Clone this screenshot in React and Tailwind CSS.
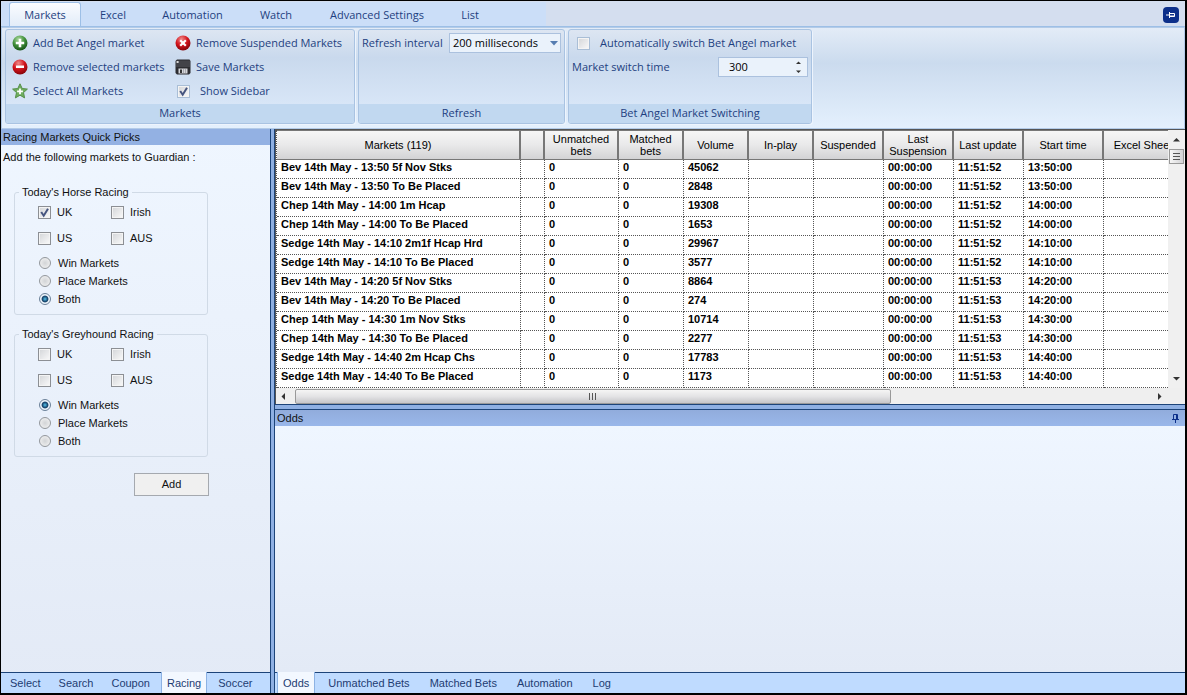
import React, { useState } from "react";
import clsx from "clsx";

const ribbonTabs = [
  { name: "Markets", width: "w-[72px]" },
  { name: "Excel", width: "w-16" },
  { name: "Automation", width: "w-[95px]" },
  { name: "Watch", width: "w-[72px]" },
  { name: "Advanced Settings", width: "w-[130px]" },
  { name: "List", width: "w-14" },
];

const sideTabs = ["Select", "Search", "Coupon", "Racing", "Soccer"];
const oddsTabs = ["Odds", "Unmatched Bets", "Matched Bets", "Automation", "Log"];

const columns = [
  { title: "Markets (119)", width: "w-[244px]" },
  { title: "", width: "w-6" },
  { title: "Unmatched bets", width: "w-[74px]" },
  { title: "Matched bets", width: "w-[65px]" },
  { title: "Volume", width: "w-[65px]" },
  { title: "In-play", width: "w-[65px]" },
  { title: "Suspended", width: "w-[70px]" },
  { title: "Last Suspension", width: "w-[70px]" },
  { title: "Last update", width: "w-[70px]" },
  { title: "Start time", width: "w-20" },
  { title: "Excel Sheet", width: "w-20" },
];

const markets = [
  { name: "Bev 14th May - 13:50 5f Nov Stks", volume: 45062, update: "11:51:52", start: "13:50:00" },
  { name: "Bev 14th May - 13:50 To Be Placed", volume: 2848, update: "11:51:52", start: "13:50:00" },
  { name: "Chep 14th May - 14:00 1m Hcap", volume: 19308, update: "11:51:52", start: "14:00:00" },
  { name: "Chep 14th May - 14:00 To Be Placed", volume: 1653, update: "11:51:52", start: "14:00:00" },
  { name: "Sedge 14th May - 14:10 2m1f Hcap Hrd", volume: 29967, update: "11:51:52", start: "14:10:00" },
  { name: "Sedge 14th May - 14:10 To Be Placed", volume: 3577, update: "11:51:52", start: "14:10:00" },
  { name: "Bev 14th May - 14:20 5f Nov Stks", volume: 8864, update: "11:51:53", start: "14:20:00" },
  { name: "Bev 14th May - 14:20 To Be Placed", volume: 274, update: "11:51:53", start: "14:20:00" },
  { name: "Chep 14th May - 14:30 1m Nov Stks", volume: 10714, update: "11:51:53", start: "14:30:00" },
  { name: "Chep 14th May - 14:30 To Be Placed", volume: 2277, update: "11:51:53", start: "14:30:00" },
  { name: "Sedge 14th May - 14:40 2m Hcap Chs", volume: 17783, update: "11:51:53", start: "14:40:00" },
  { name: "Sedge 14th May - 14:40 To Be Placed", volume: 1173, update: "11:51:53", start: "14:40:00" },
];

const BallIcon = ({ kind }) => {
  const id = `ball-${kind}`;
  const green = kind === "plus";
  return (
    <svg width="16" height="16" viewBox="0 0 16 16" aria-hidden="true">
      <defs>
        <radialGradient id={id} cx="0.4" cy="0.25" r="0.8">
          <stop offset="0" stopColor={green ? "#a9d79d" : "#f08a8a"} />
          <stop offset="0.5" stopColor={green ? "#43923c" : "#d2141c"} />
          <stop offset="1" stopColor={green ? "#124d12" : "#7c0308"} />
        </radialGradient>
      </defs>
      <circle cx="8" cy="8" r="7.5" fill={`url(#${id})`} />
      {kind === "plus" && <path d="M8 3.8v8.4M3.8 8h8.4" stroke="#fff" strokeWidth="2.6" />}
      {kind === "minus" && <path d="M4 7.7h8" stroke="#fff" strokeWidth="2.6" />}
      {kind === "cross" && <path d="M5.2 5.2l5.6 5.6M10.8 5.2l-5.6 5.6" stroke="#fff" strokeWidth="2.2" />}
    </svg>
  );
};

const StarIcon = () => (
  <svg width="16" height="16" viewBox="0 0 16 16" aria-hidden="true">
    <path d="M8 .8l2.200 4.700 5.200.6-3.900 3.500 1.100 5.300L8 12.200l-4.600 2.700 1.100-5.300L.6 6.100l5.200-.6z" fill="#6fae5f" stroke="#568f4a" strokeWidth="1" />
    <path d="M8 5.400v5.800M5.100 8.300h5.800" stroke="#fff" strokeWidth="1.8" />
  </svg>
);

const SaveIcon = () => (
  <svg width="16" height="16" viewBox="0 0 16 16" aria-hidden="true">
    <path d="M2 .5h12.500l1 1.500v12l-1.500 1.500H2L.5 14V2z" fill="#2d2d31" />
    <path d="M1 1.500h14V8H1z" fill="#434348" />
    <path d="M1.600 2h2v2h-2z" fill="#d8d8d8" />
    <path d="M3.500 9.500h9v5h-9z" fill="#d5d6da" />
    <path d="M5 10.500h2V14H5z" fill="#333" />
    <path d="M8.500 10v4M10.500 10v4" stroke="#a9a9ae" />
  </svg>
);

const Arrow = ({ dir, size = 7 }) => {
  const paths = {
    up: "M0 5.500L3.500 2 7 5.500z",
    down: "M0 2h7L3.500 5.500z",
    left: "M5 0v7L1.500 3.500z",
    right: "M2 0v7l3.500-3.500z",
  };
  return (
    <svg width={size} height={size} viewBox="0 0 7 7" aria-hidden="true">
      <path d={paths[dir]} fill="#333" />
    </svg>
  );
};

const Tick = () => (
  <svg className="absolute inset-0 hidden pointer-events-none peer-checked:block" width="13" height="13" viewBox="0 0 13 13" aria-hidden="true">
    <path d="M3.200 6l2.500 3.700L10 2.800" fill="none" stroke="#46557f" strokeWidth="2" />
  </svg>
);

const Checkbox = ({ id, checked, light }) => (
  <span className="relative flex size-[13px] shrink-0">
    <input
      id={id}
      type="checkbox"
      defaultChecked={checked}
      className={clsx(
        "peer size-[13px] appearance-none border bg-linear-to-br from-[#d3d5d8] to-[#fafafa] shadow-[inset_0_0_0_1px_#f4f4f4]",
        light ? "border-[#a9bed6]" : "border-[#8c8f94]"
      )}
    />
    <Tick />
  </span>
);

const Radio = ({ id, name, checked }) => (
  <input
    id={id}
    name={name}
    type="radio"
    defaultChecked={checked}
    className="size-3 shrink-0 appearance-none rounded-full border border-[#93979c] bg-radial from-[#d2d4d6] to-[#f6f6f6] checked:border-[#6b8199] checked:bg-radial checked:from-[#4fb4dc] checked:from-5% checked:via-[#123f66] checked:via-40% checked:to-[#eef5fb] checked:to-55%"
  />
);

const RibbonGroup = ({ title, className, children }) => (
  <section className={clsx("flex flex-col overflow-hidden rounded-[3px] border border-[#a9c3e2] bg-linear-to-b from-[#dde6f2] via-[#c9d9ed] via-30% to-[#deebfb] shadow-[1px_1px_0_#edf4fd]", className)}>
    <div className="h-[74px] pt-px">{children}</div>
    <h2 className="h-[19px] bg-[#c1d8f0] text-center leading-[18px]">{title}</h2>
  </section>
);

const RibbonButton = ({ icon, children }) => (
  <button type="button" className="flex h-6 items-center gap-[5px] whitespace-nowrap">
    {icon}
    {children}
  </button>
);

const Ribbon = () => {
  const [active, setActive] = useState("Markets");
  return (
    <header className="bg-[#d4deef] font-['Open_Sans',sans-serif] text-[11px] text-[#1e3f80]">
      <div className="flex h-[26px] items-end justify-between border-b border-[#9dbfe6] pr-1.5">
        <nav className="flex bg-[#cbdef8] pl-2 pr-12">
          {ribbonTabs.map((tab) => (
            <button
              key={tab.name}
              type="button"
              onClick={() => setActive(tab.name)}
              className={clsx(
                "h-6 whitespace-nowrap rounded-t-[3px] border border-b-0 pt-0.5",
                tab.width,
                active === tab.name ? "border-[#9dbfe6] bg-linear-to-b from-[#fafcff] to-[#e2ecf8]" : "border-transparent"
              )}
            >
              {tab.name}
            </button>
          ))}
        </nav>
        <button type="button" aria-label="Pin ribbon" className="mb-[3px] flex size-4 items-center justify-center rounded-[4px] bg-[#0c2f8a]">
          <svg width="10" height="8" viewBox="0 0 10 8" fill="none" stroke="#fff" aria-hidden="true">
            <path d="M0 4h4M3.500 1v6M3.500 2.500h5v3h-5M3.500 5h5" />
          </svg>
        </button>
      </div>
      <div className="flex items-start gap-[3px] border border-[#b3cbe8] bg-linear-to-b from-[#e3ecf7] via-[#cbdbee] via-35% to-[#e4f0fd] px-[3px] pt-px pb-1">
        <RibbonGroup title="Markets" className="w-[350px]">
          <div className="grid grid-cols-[163px_auto] justify-start pl-1.5">
            <RibbonButton icon={<BallIcon kind="plus" />}>Add Bet Angel market</RibbonButton>
            <RibbonButton icon={<BallIcon kind="cross" />}>Remove Suspended Markets</RibbonButton>
            <RibbonButton icon={<BallIcon kind="minus" />}>Remove selected markets</RibbonButton>
            <RibbonButton icon={<SaveIcon />}>Save Markets</RibbonButton>
            <RibbonButton icon={<StarIcon />}>Select All Markets</RibbonButton>
            <div className="flex h-6 items-center gap-2.5 pl-0.5">
              <Checkbox id="show-sidebar" checked light />
              <label htmlFor="show-sidebar">Show Sidebar</label>
            </div>
          </div>
        </RibbonGroup>
        <RibbonGroup title="Refresh" className="w-[207px]">
          <div className="flex h-6 items-center justify-between px-[3px]">
            <label htmlFor="interval">Refresh interval</label>
            <div className="relative">
              <select id="interval" className="block h-5 w-28 appearance-none border border-[#abc1de] bg-[#eaf2fb] pl-[3px] text-black">
                <option>200 milliseconds</option>
                <option>500 milliseconds</option>
                <option>1 second</option>
              </select>
              <svg className="pointer-events-none absolute top-2 right-[3px]" width="8" height="5" viewBox="0 0 8 5" aria-hidden="true">
                <path d="M0 0h8L4 4.500z" fill="#567db1" />
              </svg>
            </div>
          </div>
        </RibbonGroup>
        <RibbonGroup title="Bet Angel Market Switching" className="w-[244px]">
          <div className="flex h-6 items-center gap-2.5 pl-2">
            <Checkbox id="auto-switch" light />
            <label htmlFor="auto-switch">Automatically switch Bet Angel market</label>
          </div>
          <div className="flex h-6 items-center justify-between px-[3px]">
            <label htmlFor="switch-time">Market switch time</label>
            <div className="flex h-5 w-[90px] items-center border border-[#abc1de] bg-[#eaf2fb] pr-1.5">
              <input id="switch-time" type="text" defaultValue="300" className="w-full min-w-0 pl-2.5 text-black" />
              <span className="flex flex-col gap-1">
                <button type="button" aria-label="Increase"><Arrow dir="up" size={5} /></button>
                <button type="button" aria-label="Decrease"><Arrow dir="down" size={5} /></button>
              </span>
            </div>
          </div>
        </RibbonGroup>
      </div>
    </header>
  );
};

const PickGroup = ({ id, title, checked = [], market }) => (
  <fieldset className="ml-[13px] w-[194px] rounded-[3px] border border-[#d0dae6] pb-1.5 pl-[23px]">
    <legend className="-ml-[19px] px-[3px] leading-[14px]">{title}</legend>
    <div className="mb-[3px] grid grid-cols-[73px_auto] justify-start">
      {["UK", "Irish", "US", "AUS"].map((country) => (
        <div key={country} className="flex h-[26px] items-center gap-1.5">
          <Checkbox id={`${id}-${country}`} checked={checked.includes(country)} />
          <label htmlFor={`${id}-${country}`}>{country}</label>
        </div>
      ))}
    </div>
    {["Win Markets", "Place Markets", "Both"].map((item) => (
      <div key={item} className="flex h-[18px] items-center gap-[7px] pl-px">
        <Radio id={`${id}-${item}`} name={id} checked={item === market} />
        <label htmlFor={`${id}-${item}`}>{item}</label>
      </div>
    ))}
  </fieldset>
);

const BottomTabs = ({ tabs, start, className }) => {
  const [active, setActive] = useState(start);
  return (
    <nav className={clsx("flex h-[21px] shrink-0 border-t border-[#1d4479] bg-[#bfdbff] text-[#1e3c72]", className)}>
      {tabs.map((tab) => (
        <button
          key={tab}
          type="button"
          onClick={() => setActive(tab)}
          className={clsx(
            "-mt-px h-[21px] whitespace-nowrap border-x pt-0.5",
            active === tab ? "mx-0.5 border-[#8db2e3] bg-[#f3f8ff] px-[5px]" : "border-transparent px-2"
          )}
        >
          {tab}
        </button>
      ))}
    </nav>
  );
};

const Sidebar = () => (
  <aside className="flex w-[270px] shrink-0 flex-col border-r border-[#1d4479] bg-linear-to-b from-[#eff6ff] to-[#e3eaf6]">
    <h2 className="h-4 bg-[#93b1e3] pl-0.5 leading-4">Racing Markets Quick Picks</h2>
    <p className="pt-1 pl-0.5 leading-4">Add the following markets to Guardian :</p>
    <div className="flex flex-1 flex-col gap-3 pt-5">
      <PickGroup id="horses" title="Today's Horse Racing" checked={["UK"]} market="Both" />
      <PickGroup id="dogs" title="Today's Greyhound Racing" market="Win Markets" />
      <button type="button" className="mt-1 ml-[133px] h-[23px] w-[75px] border border-[#a5a9af] bg-[#f0f0f0]">
        Add
      </button>
    </div>
    <BottomTabs tabs={sideTabs} start="Racing" />
  </aside>
);

const cell = "border-r border-b border-dotted border-[#555] pl-1 leading-[14px] align-top";

const MarketTable = () => (
  <div className="min-w-0 flex-1 overflow-hidden bg-white">
    <table className="w-[908px] table-fixed border-separate border-spacing-0 border-l border-dotted border-[#555] text-left text-black">
      <thead>
        <tr className="h-[30px]">
          {columns.map((col, i) => (
            <th
              key={i}
              scope="col"
              className={clsx(
                "border-r-2 border-y border-[#777] bg-linear-to-b from-[#f6f6f6] via-[#e9e9ea] via-50% to-[#d3d3d5] p-0 text-center leading-3 font-normal",
                col.width
              )}
            >
              {col.title}
            </th>
          ))}
        </tr>
      </thead>
      <tbody className="font-bold">
        {markets.map((m) => (
          <tr key={m.name} className="h-[19px]">
            <td className={cell}>{m.name}</td>
            <td className={cell}></td>
            <td className={cell}>0</td>
            <td className={cell}>0</td>
            <td className={cell}>{m.volume}</td>
            <td className={cell}></td>
            <td className={cell}></td>
            <td className={cell}>00:00:00</td>
            <td className={cell}>{m.update}</td>
            <td className={cell}>{m.start}</td>
            <td className={cell}></td>
          </tr>
        ))}
      </tbody>
    </table>
  </div>
);

const MarketGrid = () => (
  <section className="border-t border-l border-[#555] bg-[#efefef]">
    <div className="flex">
      <MarketTable />
      <div className="flex w-[17px] shrink-0 flex-col items-center justify-between bg-[#f0f0f0] py-1">
        <div className="flex flex-col items-center gap-1">
          <button type="button" aria-label="Scroll up" className="py-0.5"><Arrow dir="up" /></button>
          <div className="flex h-[15px] w-[15px] flex-col items-center justify-center gap-0.5 border border-[#999] bg-linear-to-r from-[#f7f7f7] to-[#d2d2d4]">
            <span className="h-px w-[7px] bg-[#555]" />
            <span className="h-px w-[7px] bg-[#555]" />
            <span className="h-px w-[7px] bg-[#555]" />
          </div>
        </div>
        <button type="button" aria-label="Scroll down" className="py-0.5"><Arrow dir="down" /></button>
      </div>
    </div>
    <div className="flex h-4 items-center justify-between pr-[22px] pl-1">
      <div className="flex flex-1 items-center gap-2">
        <button type="button" aria-label="Scroll left"><Arrow dir="left" /></button>
        <div className="flex h-[15px] w-[68%] items-center justify-center gap-0.5 rounded-xs border border-[#999] bg-linear-to-b from-[#f5f5f5] via-[#e3e3e5] to-[#c6c6c9]">
          <span className="h-[7px] w-px bg-[#555]" />
          <span className="h-[7px] w-px bg-[#555]" />
          <span className="h-[7px] w-px bg-[#555]" />
        </div>
      </div>
      <button type="button" aria-label="Scroll right"><Arrow dir="right" /></button>
    </div>
  </section>
);

const OddsPanel = () => (
  <section className="flex flex-1 flex-col">
    <div className="flex h-4 items-center justify-between bg-linear-to-b from-[#91acdc] to-[#99b7ea] pr-1.5 pl-0.5">
      <h2>Odds</h2>
      <button type="button" aria-label="Pin panel">
        <svg width="7" height="9" viewBox="0 0 7 9" fill="none" stroke="#0c2f8a" aria-hidden="true">
          <path d="M1.500 5V.5h4V5M4.500.5V5M0 5.500h7M3.500 5.500V9" />
        </svg>
      </button>
    </div>
    <div className="flex-1 bg-linear-to-b from-[#eff6ff] to-[#e3eaf6]" />
    <BottomTabs tabs={oddsTabs} start="Odds" className="gap-0.5" />
  </section>
);

const App = () => {
  return (
    <div className="flex min-h-screen flex-col border border-r-2 border-b-2 border-black bg-[#8fb0e3] font-['Liberation_Sans',sans-serif] text-[11px] text-[#111]">
      <Ribbon />
      <main className="flex flex-1">
        <Sidebar />
        <div className="ml-[3px] flex min-w-0 flex-1 flex-col border-l border-[#1d4479]">
          <MarketGrid />
          <div className="h-1.5 shrink-0 border-y border-[#1d4479]" />
          <OddsPanel />
        </div>
      </main>
    </div>
  );
};

export default App;
